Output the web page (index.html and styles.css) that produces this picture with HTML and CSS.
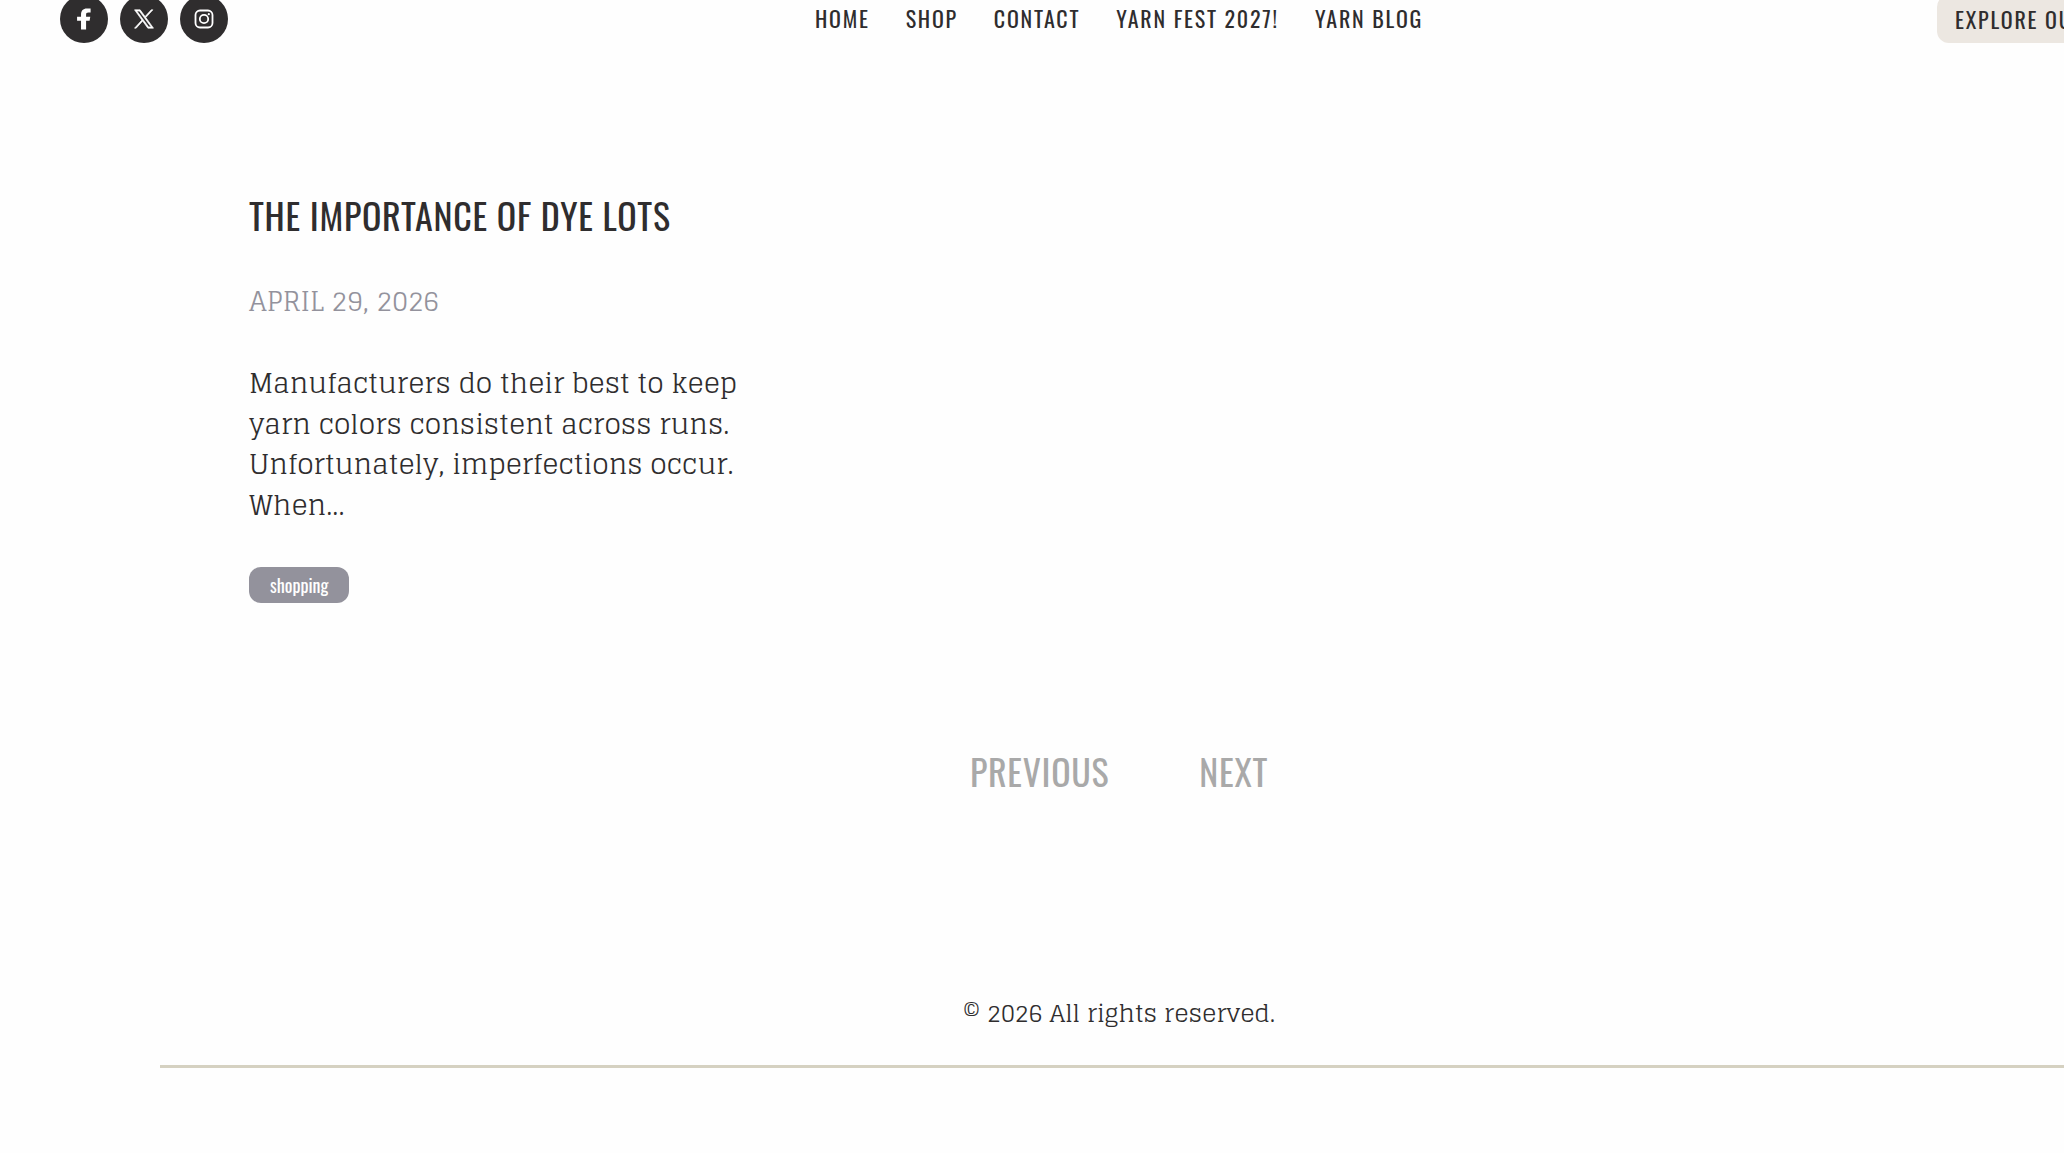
FILE: index.html
```html
<!DOCTYPE html>
<html lang="en">
<head>
<meta charset="utf-8">
<title>Yarn Blog</title>
<link rel="stylesheet" href="styles.css">
</head>
<body>
<div class="page">
  <header class="header">
    <div class="social">
      <a href="#" aria-label="Facebook"><svg width="22" height="22" viewBox="0 0 20 20"><path fill="currentColor" d="M7.300 19.500v-8H3.700V7.900h3.600V6C7.300 2.500 9.200.5 12.600.5H16v3.700h-2c-1.700 0-2.100.7-2.100 2v1.700h3.800l-.6 3.600h-3.200v8z"/></svg></a>
      <a href="#" aria-label="X"><svg width="20" height="20" viewBox="0 0 24 24"><path fill="currentColor" stroke="currentColor" stroke-width=".8" d="M14.200 10.200 22.700 1h-2l-7.400 8L7.400 1H.6l8.900 12.300L.6 23h2l7.800-8.500 6.200 8.500h6.800zM3.400 2.500h3.100l14.100 19h-3.100z"/></svg></a>
      <a href="#" aria-label="Instagram"><svg width="20" height="20" viewBox="0 0 20 20" fill="none" stroke="currentColor" stroke-width="1.800"><rect x="1.500" y="1.500" width="17" height="17" rx="4.500"/><circle cx="10" cy="10" r="4.200"/><circle cx="14.800" cy="5.200" r="1.100" fill="currentColor" stroke="none"/></svg></a>
    </div>
    <nav class="nav">
      <a href="#">HOME</a>
      <a href="#">SHOP</a>
      <a href="#">CONTACT</a>
      <a href="#">YARN FEST 2027!</a>
      <a href="#">YARN BLOG</a>
    </nav>
    <a class="explore" href="#">EXPLORE OUR</a>
  </header>
  <main class="main">
    <article class="post">
      <h2 class="title">THE IMPORTANCE OF DYE LOTS</h2>
      <time class="date" datetime="2026-04-29">APRIL 29, 2026</time>
      <p class="excerpt">Manufacturers do their best to keep yarn colors consistent across runs. Unfortunately, imperfections occur. When...</p>
      <a class="tag" href="#">shopping</a>
    </article>
    <div class="pager">
      <button type="button" disabled>PREVIOUS</button>
      <button type="button" disabled>NEXT</button>
    </div>
  </main>
  <footer class="footer">
    <p>© 2026 All rights reserved.</p>
  </footer>
</div>
</body>
</html>
```
FILE: styles.css
```css
:root {
  --ink: #2f2d2e;
  --condensed: "Oswald", "Roboto Condensed", "Liberation Sans Narrow", "Open Sans Condensed", sans-serif;
  --slab: "Glegoo", "Liberation Serif", serif;
}

* { box-sizing: border-box; }

body {
  margin: 0;
  overflow-x: hidden;
  background: #fefefe;
  color: var(--ink);
  font-family: var(--slab);
}

a { color: inherit; text-decoration: none; }

.page { width: calc(100% + 174px); }

.header {
  display: grid;
  grid-template-columns: 1fr auto 1fr;
  align-items: center;
  margin-top: -5px;
  padding: 0 60px;
}

.social { display: flex; gap: 12px; }

.social a {
  display: flex;
  align-items: center;
  justify-content: center;
  width: 48px;
  height: 48px;
  border-radius: 50%;
  background: var(--ink);
  color: #fff;
}

.nav {
  display: flex;
  gap: 36px;
  padding-bottom: 2px;
  font: 400 22px/44px var(--condensed);
  letter-spacing: 0.08em;
}

.explore {
  justify-self: end;
  width: 241px;
  padding: 0 18px;
  border-radius: 12px;
  background: #ece7e1;
  font: 400 22px/48px var(--condensed);
  letter-spacing: 0.08em;
  white-space: nowrap;
}

.main { padding: 144px 249px 0; }

.post { width: 500px; }

.title {
  margin: 0 0 38px;
  font: 400 36px/56px var(--condensed);
  letter-spacing: 0.02em;
}

.date {
  display: block;
  margin-bottom: 41px;
  color: #93929c;
  font-size: 27px;
  line-height: 41px;
}

.excerpt {
  margin: 0 0 42px;
  font-size: 27px;
  line-height: 1.5;
}

.tag {
  display: inline-block;
  padding: 0 21px;
  border-radius: 12px;
  background: #93929c;
  color: #fff;
  font: 400 18px/36px var(--condensed);
}

.pager {
  display: flex;
  justify-content: center;
  gap: 90px;
  margin-top: 140px;
}

.pager button {
  padding: 0;
  border: 0;
  background: none;
  color: #a9a9a9;
  font: 400 36px/56px var(--condensed);
  letter-spacing: 0.02em;
}

.footer {
  margin: 195px 160px 84px;
  border-bottom: 3px solid #d5d1c1;
  text-align: center;
}

.footer p {
  margin: 0;
  padding-bottom: 31px;
  font-size: 24px;
  line-height: 40px;
}
```
